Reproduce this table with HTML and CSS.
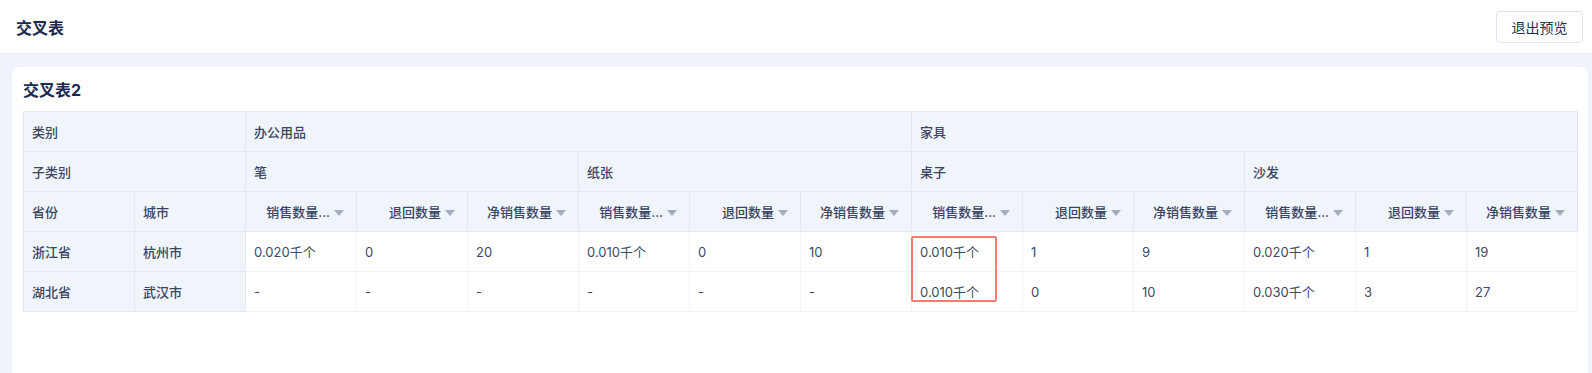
FILE: index.html
```html
<!DOCTYPE html>
<html lang="zh">
<head>
<meta charset="utf-8">
<link rel="stylesheet" href="styles.css">
</head>
<body>
<header class="topbar">
  <div class="page-title">交叉表</div>
  <button class="exit-btn">退出预览</button>
</header>
<main class="content">
  <section class="card">
    <div class="card-title">交叉表2</div>
    <div class="table-wrap">
      <table class="pivot">
        <colgroup>
          <col><col><col><col><col><col><col><col><col><col><col><col><col><col>
        </colgroup>
        <tr class="hrow">
          <th colspan="2">类别</th>
          <th colspan="6">办公用品</th>
          <th colspan="6">家具</th>
        </tr>
        <tr class="hrow">
          <th colspan="2">子类别</th>
          <th colspan="3">笔</th>
          <th colspan="3">纸张</th>
          <th colspan="3">桌子</th>
          <th colspan="3">沙发</th>
        </tr>
        <tr class="hrow">
          <th>省份</th>
          <th>城市</th>
          <th class="m"><span class="mh"><span class="mt">销售数量...</span><i class="tri"></i></span></th>
          <th class="m"><span class="mh"><span class="mt">退回数量</span><i class="tri"></i></span></th>
          <th class="m"><span class="mh"><span class="mt">净销售数量</span><i class="tri"></i></span></th>
          <th class="m"><span class="mh"><span class="mt">销售数量...</span><i class="tri"></i></span></th>
          <th class="m"><span class="mh"><span class="mt">退回数量</span><i class="tri"></i></span></th>
          <th class="m"><span class="mh"><span class="mt">净销售数量</span><i class="tri"></i></span></th>
          <th class="m"><span class="mh"><span class="mt">销售数量...</span><i class="tri"></i></span></th>
          <th class="m"><span class="mh"><span class="mt">退回数量</span><i class="tri"></i></span></th>
          <th class="m"><span class="mh"><span class="mt">净销售数量</span><i class="tri"></i></span></th>
          <th class="m"><span class="mh"><span class="mt">销售数量...</span><i class="tri"></i></span></th>
          <th class="m"><span class="mh"><span class="mt">退回数量</span><i class="tri"></i></span></th>
          <th class="m"><span class="mh"><span class="mt">净销售数量</span><i class="tri"></i></span></th>
        </tr>
        <tr class="drow">
          <th>浙江省</th>
          <th>杭州市</th>
          <td>0.020千个</td><td>0</td><td>20</td>
          <td>0.010千个</td><td>0</td><td>10</td>
          <td>0.010千个</td><td>1</td><td>9</td>
          <td>0.020千个</td><td>1</td><td>19</td>
        </tr>
        <tr class="drow">
          <th>湖北省</th>
          <th>武汉市</th>
          <td>-</td><td>-</td><td>-</td>
          <td>-</td><td>-</td><td>-</td>
          <td>0.010千个</td><td>0</td><td>10</td>
          <td>0.030千个</td><td>3</td><td>27</td>
        </tr>
      </table>
      <div class="highlight"></div>
    </div>
  </section>
</main>
</body>
</html>
```
FILE: styles.css
```css
* { box-sizing: border-box; }
html, body { margin: 0; padding: 0; }
body {
  width: 1592px;
  height: 373px;
  overflow: hidden;
  background: #f0f3fa;
  font-family: Inter, "Noto Sans CJK SC", sans-serif;
  color: #3a4563;
  display: flex;
  flex-direction: column;
}
.topbar {
  flex: 0 0 54px;
  height: 54px;
  background: #fff;
  border-bottom: 1px solid #e4e8f0;
  display: flex;
  align-items: center;
  justify-content: space-between;
  padding: 0 9px 0 16px;
}
.page-title {
  font-size: 16px;
  font-weight: 700;
  color: #1c2a4f;
  padding-top: 1px;
}
.exit-btn {
  width: 87px;
  height: 32px;
  margin-top: 1px;
  background: #fff;
  border: 1px solid #dde2ee;
  border-radius: 4px;
  font-family: Inter, "Noto Sans CJK SC", sans-serif;
  font-size: 14px;
  color: #26314f;
  padding: 0;
}
.content {
  flex: 1 1 auto;
  min-height: 0;
  display: flex;
  padding: 13px 4px 0 12px;
}
.card {
  flex: 1 1 auto;
  background: #fff;
  border-radius: 8px 8px 0 0;
  padding: 12px 11px 0 11px;
}
.card-title {
  font-size: 16px;
  font-weight: 700;
  color: #1c2a4f;
  line-height: 22px;
  margin-bottom: 10px;
}
.table-wrap {
  position: relative;
  width: 1554px;
}
.pivot {
  table-layout: fixed;
  border-collapse: collapse;
  width: 1554px;
  font-size: 13px;
}
.pivot col { width: 111px; }
.pivot th, .pivot td {
  height: 40px;
  padding: 0 8px;
  text-align: left;
  white-space: nowrap;
  overflow: hidden;
}
.pivot th {
  background: #f0f4fb;
  border: 1px solid #e2e7f1;
  font-weight: 500;
  color: #3a4563;
}
.pivot td {
  background: #fff;
  border: 1px solid #f2f4f9;
  font-weight: 400;
  color: #3d4966;
}
.pivot th.m {
  text-align: right;
  padding-right: 12px;
}
.mh {
  display: inline-flex;
  align-items: center;
  gap: 4px;
  vertical-align: middle;
}
.mt {
  white-space: nowrap;
}
.tri {
  display: inline-block;
  width: 0;
  height: 0;
  border-left: 5px solid transparent;
  border-right: 5px solid transparent;
  border-top: 6px solid #a4acbd;
  margin-top: 2px;
}
.highlight {
  position: absolute;
  left: 888px;
  top: 125px;
  width: 86px;
  height: 66px;
  border: 2px solid #f47b72;
  border-radius: 2px;
  pointer-events: none;
}
```
